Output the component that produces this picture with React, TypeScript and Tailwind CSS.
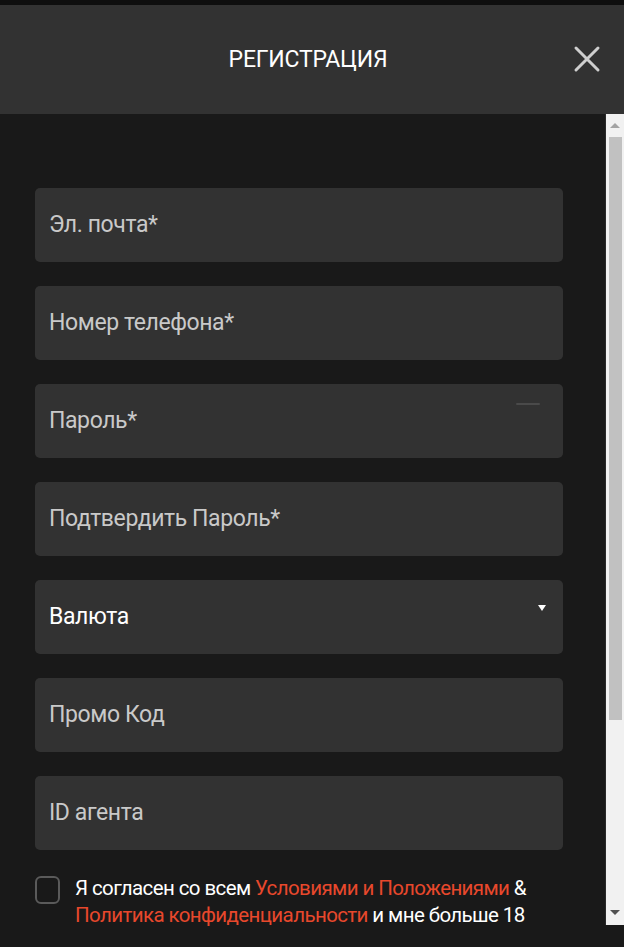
import React from 'react';

const fields = [
  'Эл. почта*',
  'Номер телефона*',
  'Пароль*',
  'Подтвердить Пароль*',
];

function Field({ label, children, bright }: { label: string; children?: React.ReactNode; bright?: boolean }) {
  return (
    <div className="relative h-[74px] w-[528px] rounded-[5px] bg-[#323232] flex items-center pl-[14px]">
      <span className={`text-[23px] tracking-[-0.4px] ${bright ? 'text-white' : 'text-[#c9c9c9]'}`}>{label}</span>
      {children}
    </div>
  );
}

export default function App() {
  return (
    <div className="h-[947px] w-[624px] flex flex-col bg-[#191919] overflow-hidden" style={{ fontFamily: 'Roboto, "Liberation Sans", sans-serif' }}>
      <div className="h-[5px] bg-[#0e0e0e]" />
      {/* header */}
      <div className="h-[109px] bg-[#323232] flex items-center justify-center relative">
        <h1 className="text-white text-[23px] tracking-[-0.2px] pr-[8px] pt-[2px]">РЕГИСТРАЦИЯ</h1>
        <button className="absolute left-[572px] top-[39px] w-[30px] h-[30px] flex items-center justify-center">
          <svg width="28" height="28" viewBox="0 0 28 28" fill="none" stroke="#cfcfcf" strokeWidth="3" strokeLinecap="round">
            <path d="M3 3 L25 25 M25 3 L3 25" />
          </svg>
        </button>
      </div>

      <div className="flex flex-1">
        {/* form */}
        <div className="flex-1 pt-[74px] pl-[35px] flex flex-col gap-[24px]">
          {fields.map((f) => (
            <Field key={f} label={f}>
              {f === 'Пароль*' && <span className="absolute left-[481px] top-[19px] w-[24px] h-[2px] bg-[#4a4a4a] rounded" />}
            </Field>
          ))}
          <Field label="Валюта" bright>
            <span className="absolute left-[503px] top-[25px] w-0 h-0 border-l-[4px] border-r-[4px] border-t-[6px] border-l-transparent border-r-transparent border-t-white" />
          </Field>
          <Field label="Промо Код" />
          <Field label="ID агента" />

          <div className="flex items-start gap-[15px] pt-[1px]">
            <div className="mt-[1px] w-[25px] h-[28px] rounded-[6px] border-2 border-[#5a5a5a] shrink-0" />
            <p className="text-[20.5px] leading-[27px] tracking-[-0.6px] text-white">
              Я согласен со всем <span className="text-[#e8482c]">Условиями и Положениями</span> &amp;
              <br />
              <span className="text-[#e8482c]">Политика конфиденциальности</span> и мне больше 18
            </p>
          </div>
        </div>

        {/* scrollbar */}
        <div className="w-[19px] h-[811px] bg-[#f1f1f1] flex flex-col items-center border-l border-[#2a2a2a]">
          <div className="h-[23px] flex items-center justify-center">
            <span className="w-0 h-0 border-l-[5px] border-r-[5px] border-b-[5px] border-l-transparent border-r-transparent border-b-[#a3a3a3]" />
          </div>
          <div className="w-[13px] h-[583px] bg-[#c1c1c1]" />
          <div className="flex-1" />
          <div className="h-[26px] flex items-center justify-center">
            <span className="w-0 h-0 border-l-[5px] border-r-[5px] border-t-[5px] border-l-transparent border-r-transparent border-t-[#505050]" />
          </div>
        </div>
      </div>
    </div>
  );
}
